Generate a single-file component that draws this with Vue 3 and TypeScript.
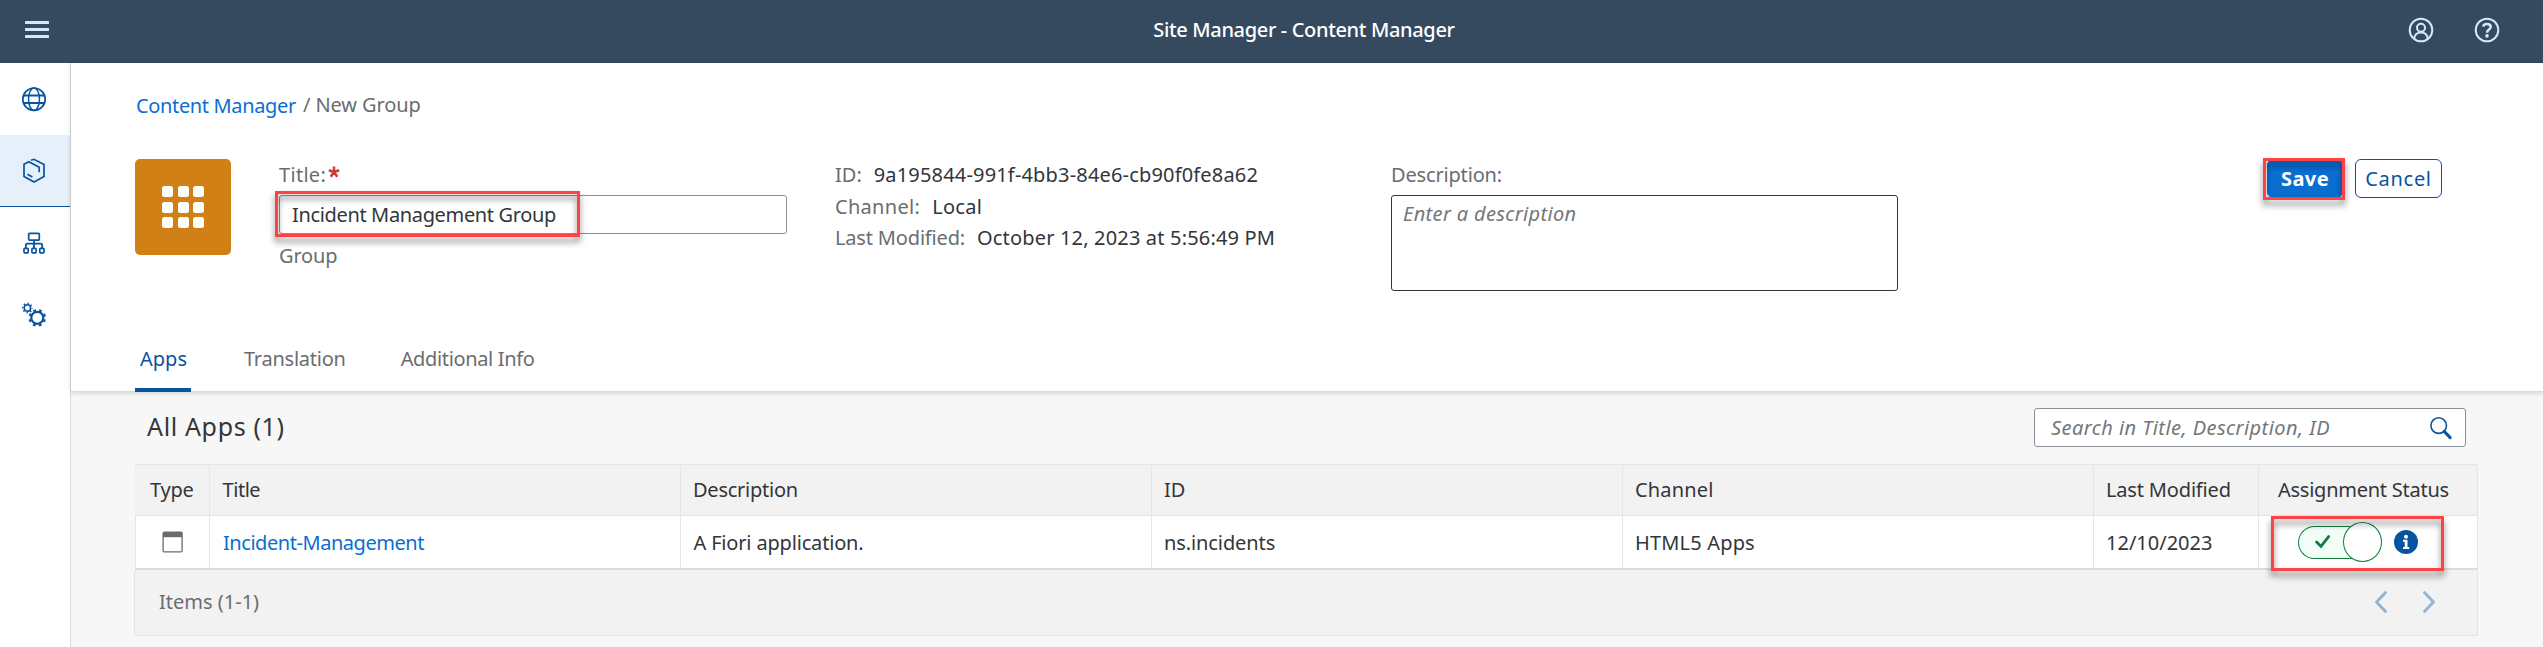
<script setup lang="ts">
interface Column {
  title: string
  value: string
  headClass: string
  cellClass: string
}

const columns: Column[] = [
  { title: 'Description', value: 'A Fiori application.', headClass: 'ls-n25', cellClass: 'ls-n17 wide-pad' },
  { title: 'ID', value: 'ns.incidents', headClass: '', cellClass: 'ls-n10' },
  { title: 'Channel', value: 'HTML5 Apps', headClass: 'ls-p17', cellClass: 'ls-p17' },
  { title: 'Last Modified', value: '12/10/2023', headClass: 'ls-n17', cellClass: '' },
]

const tiles = [0, 1, 2, 3, 4, 5, 6, 7, 8]
</script>

<template>
  <div class="app">
    <header class="shell">
      <svg class="menu" width="24" height="17" viewBox="0 0 24 17">
        <path d="M1 1.5H23M1 8.5H23M1 15.5H23" stroke="#d1e8ff" stroke-width="3" stroke-linecap="round" />
      </svg>
      <div class="shell-title ls-n35">Site Manager - Content Manager</div>
      <div class="shell-actions">
        <svg width="26" height="26" viewBox="0 0 26 26" fill="none" stroke="#d1e8ff" stroke-width="2">
          <circle cx="13" cy="13" r="11.3" />
          <circle cx="13" cy="10.7" r="4" />
          <path d="M6.2 21.5C6.8 17.4 9.2 15.6 13 15.6S19.2 17.4 19.8 21.5" />
        </svg>
        <svg width="26" height="26" viewBox="0 0 26 26" fill="none" stroke="#d1e8ff" stroke-width="2">
          <circle cx="13" cy="13" r="11.3" />
          <path d="M9.3 9.6C9.4 7.9 10.8 7.1 13 7.1C15.3 7.1 16.7 8.1 16.7 9.9C16.7 12.6 13 12.3 13 15.8" stroke-width="2.5" />
          <circle cx="13" cy="18.9" r="1.8" fill="#d1e8ff" stroke="none" />
        </svg>
      </div>
    </header>

    <div class="body">
      <nav class="side">
        <div class="nav-item">
          <svg width="26" height="26" viewBox="0 0 26 26">
            <circle cx="13" cy="13.2" r="11.2" stroke-width="1.7" />
            <ellipse cx="13" cy="13.2" rx="5.5" ry="11.2" stroke-width="1.5" />
            <path d="M2.8 9.5H23.2M2.8 17H23.2" stroke-width="2" />
          </svg>
        </div>
        <div class="nav-item active">
          <svg width="26" height="26" viewBox="0 0 26 26">
            <path d="M10 2.3L13 1.3L23 6.6V18.6L13 24L3 18.6V6.2L7.8 3.7L18.2 9.2V14.2M6.4 16.3L11.4 19" stroke-width="1.7" />
          </svg>
        </div>
        <div class="nav-item">
          <svg width="26" height="26" viewBox="0 0 26 26">
            <rect x="7.7" y="3.3" width="10.6" height="6.8" rx="0.8" stroke-width="1.7" />
            <path d="M13 10V18M4.8 18V15.5Q4.8 13.7 6.6 13.7H19.4Q21.2 13.7 21.2 15.5V18" stroke-width="1.8" />
            <rect x="3" y="18.4" width="4.2" height="4.4" rx="0.8" stroke-width="1.7" />
            <rect x="10.9" y="18.4" width="4.2" height="4.4" rx="0.8" stroke-width="1.7" />
            <rect x="18.8" y="18.4" width="4.2" height="4.4" rx="0.8" stroke-width="1.7" />
          </svg>
        </div>
        <div class="nav-item">
          <svg width="26" height="26" viewBox="0 0 26 26">
            <circle cx="6.4" cy="6" r="3.2" stroke-width="1.6" />
            <circle cx="6.4" cy="6" r="4.6" stroke-width="1.6" stroke-dasharray="1.4 2.213" stroke-dashoffset="0.7" />
            <circle cx="16.3" cy="15.8" r="6" stroke-width="2.2" />
            <circle cx="16.3" cy="15.8" r="7.7" stroke-width="2.2" stroke-dasharray="2.8 3.248" stroke-dashoffset="-1.6" />
          </svg>
        </div>
      </nav>

      <main class="main">
        <section class="head">
          <div class="crumbs">
            <a class="link ls-n35">Content Manager</a><span class="slash">/</span><span class="ls-n10">New Group</span>
          </div>

          <div class="object">
            <div class="avatar"><i v-for="t in tiles" :key="t" class="tile"></i></div>

            <div class="field">
              <div class="label"><span class="ls-p30">Title:</span>
                <svg width="12" height="12" viewBox="0 0 12 12" stroke="#cc3b3b" stroke-width="2.5">
                  <path d="M6 6V.5M6 6L.8 4.3M6 6L11.2 4.3M6 6L2.7 10.8M6 6L9.3 10.8" />
                </svg>
              </div>
              <div class="input ls-n35">Incident Management Group<div class="mark mark-title"></div></div>
              <div class="sub ls-n17">Group</div>
            </div>

            <div class="facts">
              <div><span>ID:</span><b class="ls-p17">9a195844-991f-4bb3-84e6-cb90f0fe8a62</b></div>
              <div><span class="ls-p30">Channel:</span><b class="ls-p30">Local</b></div>
              <div><span class="ls-n17">Last Modified:</span><b class="ls-p17">October 12, 2023 at 5:56:49 PM</b></div>
            </div>

            <div class="desc">
              <div class="label ls-n17">Description:</div>
              <div class="textarea ls-p35">Enter a description</div>
            </div>

            <div class="actions">
              <button class="save">Save<span class="mark mark-save"></span></button>
              <button class="cancel">Cancel</button>
            </div>
          </div>

          <div class="tabs">
            <div class="tab on">Apps</div>
            <div class="tab t2 ls-n25">Translation</div>
            <div class="tab t3 ls-n35">Additional Info</div>
          </div>
        </section>

        <section class="list">
          <div class="toolbar">
            <h2>All Apps (1)</h2>
            <div class="search">
              <span class="ls-p45">Search in Title, Description, ID</span>
              <svg width="24" height="24" viewBox="0 0 24 24" fill="none" stroke="#0854a0">
                <circle cx="9.7" cy="9.6" r="7.8" stroke-width="1.6" />
                <path d="M15.2 15.4L21.2 21.6" stroke-width="3" stroke-linecap="round" />
              </svg>
            </div>
          </div>

          <div class="table">
            <div class="row hrow">
              <div class="cell type">Type</div>
              <div class="cell wide-pad ls-n45">Title</div>
              <div v-for="c in columns" :key="c.title" class="cell" :class="c.headClass">{{ c.title }}</div>
              <div class="cell assign ls-n25">Assignment Status</div>
            </div>
            <div class="row drow">
              <div class="cell icon">
                <svg width="22" height="22" viewBox="0 0 22 22">
                  <rect x="1.1" y="1.1" width="19" height="19.8" rx="1.3" fill="none" stroke="#6a6d70" stroke-width="1.3" />
                  <path d="M1 1H20.2V6.2H1Z" fill="#6a6d70" />
                </svg>
              </div>
              <div class="cell wide-pad text link link-cell ls-n45">Incident-Management</div>
              <div v-for="c in columns" :key="c.title" class="cell text" :class="c.cellClass">{{ c.value }}</div>
              <div class="cell status">
                <div class="switch">
                  <svg class="check" width="16" height="14" viewBox="0 0 16 14" fill="none" stroke="#107e3e" stroke-width="2.8">
                    <path d="M1.6 7L6 11.4L13.6 1.6" stroke-linecap="round" />
                  </svg>
                  <div class="knob"></div>
                </div>
                <svg class="info" width="24" height="24" viewBox="0 0 24 24">
                  <circle cx="12" cy="12" r="12" fill="#0854a0" />
                  <circle cx="12" cy="6.7" r="2" fill="#fff" />
                  <path d="M9 9.8H13.5V17.1H15.2V19H9V17.1H10.7V11.7H9Z" fill="#fff" />
                </svg>
                <div class="mark mark-status"></div>
              </div>
            </div>
            <div class="foot">
              <span>Items (1-1)</span>
              <svg width="62" height="24" viewBox="0 0 62 24" fill="none" stroke="#93b3d3" stroke-width="2.8" stroke-linecap="round" stroke-linejoin="round">
                <path d="M11.5 2.5L2.5 12L11.5 21.5M50.5 2.5L59.5 12L50.5 21.5" />
              </svg>
            </div>
          </div>
        </section>
      </main>
    </div>
  </div>
</template>

<style>
html, body { margin: 0; overflow: hidden; background: #f7f7f7; }
</style>

<style scoped>
* { box-sizing: border-box; }
.app {
  width: 100%;
  height: 647px;
  overflow: hidden;
  display: flex;
  flex-direction: column;
  font: 20px/24px "Noto Sans", sans-serif;
  color: #32363a;
  white-space: nowrap;
}
.ls-n10 { letter-spacing: -0.1px; }
.ls-n17 { letter-spacing: -0.17px; }
.ls-n25 { letter-spacing: -0.25px; }
.ls-n35 { letter-spacing: -0.35px; }
.ls-n45 { letter-spacing: -0.45px; }
.ls-p17 { letter-spacing: 0.17px; }
.ls-p30 { letter-spacing: 0.3px; }
.ls-p35 { letter-spacing: 0.35px; }
.ls-p45 { letter-spacing: 0.45px; }

.shell {
  height: 63px;
  flex: none;
  background: #354a5f;
  display: grid;
  grid-template-columns: 1fr auto 1fr;
  align-items: center;
  padding: 0 43px 4px 25px;
}
.menu { display: block; }
.shell-title { color: #fff; font-weight: 500; padding-left: 83px; }
.shell-actions { display: flex; justify-content: flex-end; gap: 40px; }

.body { flex: 1; display: flex; min-height: 0; }
.side { width: 71px; flex: none; background: #fff; border-right: 1px solid #d9d9d9; }
.nav-item {
  height: 72px;
  display: flex;
  align-items: center;
  padding: 0 0 0 21px;
}
.nav-item svg { fill: none; stroke: #0854a0; }
.nav-item.active { background: #e5f0fa; border-bottom: 1px solid #0854a0; }

.main { flex: 1; min-width: 0; display: flex; flex-direction: column; background: #f7f7f7; }
.head {
  height: 329px;
  flex: none;
  background: #fff;
  padding: 30px 0 0 64px;
  display: flex;
  flex-direction: column;
  border-bottom: 1px solid #d9d9d9;
  box-shadow: 0 1px 5px rgba(0, 0, 0, 0.16);
}
.crumbs { display: flex; height: 25px; color: #6a6d70; }
.link { color: #0a6ed1; }
.crumbs .link { padding: 1px 0 0 1px; }
.slash { margin: 0 5px 0 7px; }

.object { display: flex; margin-top: 41px; height: 132px; }
.avatar {
  width: 96px;
  height: 96px;
  background: #d08014;
  border-radius: 5px;
  display: grid;
  grid-template-columns: repeat(3, 11px);
  grid-auto-rows: 11px;
  gap: 4.5px;
  place-content: center;
}
.tile { background: #fff; border-radius: 2.5px; }
.field { width: 508px; margin-left: 48px; }
.label { color: #6a6d70; padding-top: 4px; height: 36px; display: flex; }
.label svg { margin: 3px 0 0 2px; }
.input {
  position: relative;
  height: 39px;
  border: 1px solid #89919a;
  border-radius: 3px;
  padding: 7px 0 0 12px;
}
.sub { color: #6a6d70; margin-top: 10px; }
.facts { width: 603px; padding-left: 48px; line-height: 31.5px; }
.facts span { color: #6a6d70; display: inline-block; }
.facts b { font-weight: 400; margin-left: 12px; }
.desc { width: 507px; margin-left: 1px; }
.textarea {
  height: 96px;
  border: 1px solid #32363a;
  border-radius: 3px;
  padding: 6px 11px;
  color: #74777a;
  font-style: italic;
}
.actions { margin-left: auto; margin-right: 101px; display: flex; gap: 12px; }
button {
  position: relative;
  height: 39px;
  border-radius: 6px;
  font: inherit;
  padding: 1px 0 0;
}
.save { width: 76px; background: #0a6ed1; border: 1px solid #0a6ed1; color: #fff; font-weight: 700; letter-spacing: 0.4px; }
.cancel { width: 87px; background: #fff; border: 1px solid #0854a0; color: #0854a0; letter-spacing: 0.7px; }

/* Callout frames lie over the controls they point out */
.mark {
  position: absolute;
  border: 3px solid #fd4343;
  filter: drop-shadow(0 5px 3px rgba(0, 0, 0, 0.5));
}
.mark-title { left: -5px; top: -5px; width: 305px; height: 46px; }
.mark-save { left: -5px; top: -2px; width: 82px; height: 42px; }
.mark-status { left: 12px; top: 0; width: 173px; height: 55px; }

.tabs { display: flex; margin-top: auto; height: 46px; color: #6a6d70; margin-bottom: -1px; position: relative; }
.tab { height: 46px; padding-top: 1px; }
.tab.on {
  width: 56px;
  padding-left: 5px;
  color: #0854a0;
  border-bottom: 4px solid #0854a0;
  border-radius: 2px 2px 0 0;
}
.t2 { margin-left: 53px; }
.t3 { margin-left: 55px; }

.list { padding: 16px 65px 0 64px; }
.toolbar { height: 39px; display: flex; justify-content: space-between; padding: 0 12px; }
h2 { margin: 0; font-weight: 400; font-size: 25px; line-height: 37px; letter-spacing: 0.65px; }
.search {
  width: 432px;
  border: 1px solid #89919a;
  border-radius: 3px;
  background: #fff;
  display: flex;
  justify-content: space-between;
  align-items: center;
  padding: 1px 12px 0 16px;
  color: #74777a;
  font-style: italic;
}
.table { margin-top: 17px; }
.row { display: grid; grid-template-columns: 75px 471px 471px 471px 471px 165px 219px; }
.hrow { height: 52px; background: #f2f2f2; border-top: 1px solid #e5e5e5; border-bottom: 1px solid #e5e5e5; }
.drow { height: 54px; background: #fff; border-bottom: 2px solid #dcdcdc; box-shadow: inset 1px 0 #e5e5e5; }
.cell { display: flex; align-items: center; border-right: 1px solid #e5e5e5; padding-left: 12px; }
.cell.text { padding-top: 2px; }
.wide-pad { padding-left: 12.5px; }
.cell.link-cell { padding-left: 13px; }
.cell.type { padding-left: 15px; letter-spacing: -0.2px; }
.cell.assign { padding-left: 19px; }
.cell.icon { padding-left: 27px; }
.cell.status { position: relative; padding-left: 39px; }
.switch {
  position: relative;
  width: 84px;
  height: 33px;
  border: 1px solid #107e3e;
  border-right-color: transparent;
  border-radius: 17px;
  background: #f1fdf6;
}
.check { position: absolute; left: 16px; top: 8px; }
.knob {
  position: absolute;
  right: -1px;
  top: -5px;
  width: 39px;
  height: 40px;
  border: 1px solid #107e3e;
  border-radius: 50%;
  background: #fff;
}
.info { margin-left: 12px; }
.foot {
  margin-left: -1px;
  height: 66px;
  background: #f2f2f2;
  border: 1px solid #e5e5e5;
  border-top: 0;
  display: flex;
  align-items: center;
  justify-content: space-between;
  padding: 0 41px 1px 24px;
  color: #6a6d70;
}
</style>
